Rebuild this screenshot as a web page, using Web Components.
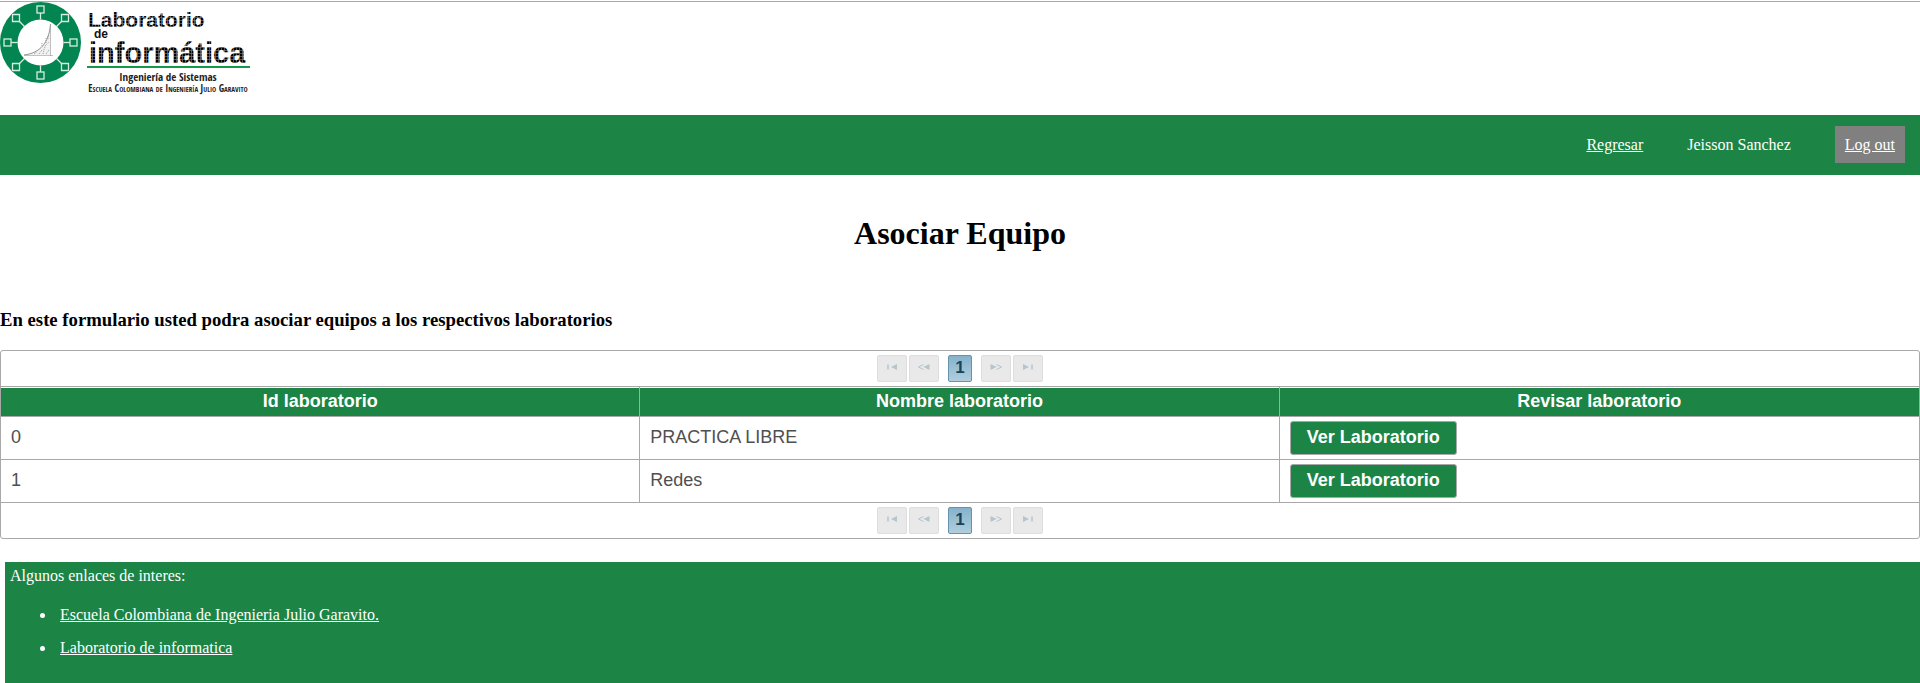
<!DOCTYPE html>
<html lang="es">
<head>
<meta charset="utf-8">
<title>Asociar Equipo</title>
<style>
  body { margin: 0; background: #fff; font: 16px/18px "Liberation Serif", "Times New Roman", serif; --green: #1c8445; --line: #a8a8a8; }
</style>
</head>
<body>
<lab-page>
  <lab-header slot="header"></lab-header>
  <lab-nav slot="header"></lab-nav>
  <lab-table></lab-table>
  <lab-footer slot="footer"></lab-footer>
</lab-page>

<template id="page">
  <style>
    :host { display: flex; flex-direction: column; min-height: 100vh; }
    h1 { margin: 40px 0 0; font-size: 32px; line-height: 36px; text-align: center; }
    h3 { margin: 58px 0 19px; line-height: 22px; }
  </style>
  <slot name="header"></slot>
  <main>
    <h1>Asociar Equipo</h1>
    <h3>En este formulario usted podra asociar equipos a los respectivos laboratorios</h3>
    <slot></slot>
  </main>
  <slot name="footer"></slot>
</template>

<template id="header">
  <style>
    :host { display: block; padding: 1px 0 18px; }
    header { border-top: 1px solid var(--line); }
    svg { display: block; }
  </style>
  <header>
    <svg width="260" height="95" viewBox="0 2 260 95" role="img" aria-label="Laboratorio de Informática">
      <defs>
        <pattern id="dots" width="3" height="3" patternUnits="userSpaceOnUse">
          <rect width="3" height="3" fill="#777"/><rect width="2.3" height="2.3" fill="#000"/>
        </pattern>
        <g id="node"><path d="M0-23V-29.500"/><rect x="-3.500" y="-36.500" width="7" height="7"/></g>
      </defs>
      <circle cx="40.500" cy="42.500" r="40.500" fill="#028550"/>
      <circle cx="40.500" cy="42.500" r="23" fill="#fff"/>
      <g transform="translate(40.500 42.500)" fill="none" stroke="#d4eee1" stroke-width="1.300">
        <use href="#node"/><use href="#node" transform="rotate(90)"/><use href="#node" transform="rotate(180)"/><use href="#node" transform="rotate(270)"/>
        <path d="M16-16L21-21M16 16L21 21M-16 16L-21 21M-16-16L-21-21"/>
        <path d="M21-28h7v7h-7zM21 21h7v7h-7zM-28 21h7v7h-7zM-28-28h7v7h-7z"/>
      </g>
      <path d="M25 55C40 53 49 43 50.500 25V55Z" fill="#f2f2f2"/>
      <path d="M24 55C40 53 49 43 50.500 24" fill="none" stroke="#777" stroke-width=".8"/>
      <path d="M24 55.500H53M50.500 24V56" fill="none" stroke="#999" stroke-width=".6"/>
      <path d="M34 54l3-2m2 2l3-4m1 4l2-8m1 8l3-4m-4-4l4-4m-1-6v4m-6 3v4m4-9v5" fill="none" stroke="#999" stroke-dasharray="1 1"/>
      <g font-family="'Liberation Sans', Arial, sans-serif" font-weight="bold" fill="url(#dots)">
        <text x="88" y="27" font-size="21">Laboratorio</text>
        <text x="94" y="38" font-size="12" fill="#111">de</text>
        <text x="89" y="63" font-size="29">informática</text>
      </g>
      <path d="M87 67H250" stroke="#16984b" stroke-width="2"/>
      <g font-family="'Open Sans Condensed', 'Open Sans', Lato, sans-serif" font-weight="300" fill="#222" text-anchor="middle">
        <text x="168" y="81" font-size="11">Ingeniería de Sistemas</text>
        <text x="168" y="92" font-size="10" font-variant="small-caps">Escuela Colombiana de Ingeniería Julio Garavito</text>
      </g>
    </svg>
  </header>
</template>

<template id="nav">
  <style>
    :host { display: block; background: var(--green); color: #fff; }
    nav { display: flex; justify-content: flex-end; align-items: baseline; gap: 44px; padding: 11px 15px 12px; }
    a, span { color: inherit; }
    .out { background: #808080; padding: 10px 10px 9px; }
  </style>
  <nav><a href="#regresar">Regresar</a><span>Jeisson Sanchez</span><a class="out" href="#logout">Log out</a></nav>
</template>

<template id="pager">
  <style>
    :host { display: flex; justify-content: center; align-items: center; gap: 2px; height: 35px; }
    button { box-sizing: border-box; width: 30px; height: 27px; padding: 0 0 2px; border: 1px solid #dedede; border-radius: 2px; background: #e9e9e9; display: grid; place-items: center; font: bold 17px/20px "Liberation Sans", Arial, sans-serif; }
    .page { width: 24px; margin: 0 7px; border-color: #6592ad; color: #1c4257; background: linear-gradient(#85b2cb, #b0cede); }
    svg { display: block; width: 14px; height: 10px; margin-bottom: 2px; fill: #b5c5ce; stroke: #b5c5ce; }
    .flip { transform: scaleX(-1); }
  </style>
  <button aria-label="Primera página" disabled><svg viewBox="0 0 14 10"><path d="M3 2.500V7.500" stroke-width="1.500"/><path d="M12 2V8L6 5Z" stroke="none"/></svg></button>
  <button aria-label="Página anterior" disabled><svg viewBox="0 0 14 10"><path d="M6.500 2.500L1.500 5L6.500 7.500" fill="none"/><path d="M12.500 2V8L6.500 5Z" stroke="none"/></svg></button>
  <button class="page">1</button>
  <button aria-label="Página siguiente" disabled><svg class="flip" viewBox="0 0 14 10"><path d="M6.500 2.500L1.500 5L6.500 7.500" fill="none"/><path d="M12.500 2V8L6.500 5Z" stroke="none"/></svg></button>
  <button aria-label="Última página" disabled><svg class="flip" viewBox="0 0 14 10"><path d="M3 2.500V7.500" stroke-width="1.500"/><path d="M12 2V8L6 5Z" stroke="none"/></svg></button>
</template>

<template id="table">
  <style>
    :host { display: block; border: 1px solid var(--line); border-radius: 3px; font: 18px/22px "Liberation Sans", Arial, sans-serif; color: #4f4f4f; }
    table { width: 100%; table-layout: fixed; border-spacing: 0; border-bottom: 1px solid var(--line); }
    th, td { box-sizing: border-box; border-top: 1px solid var(--line); padding: 4px 10px; text-align: left; }
    th:not(:last-child), td:not(:last-child) { border-right: 1px solid var(--line); }
    th { height: 30px; padding: 0 10px 2px; text-align: center; color: #fff; background: var(--green); box-shadow: inset 0 1px #fff; }
    td { height: 43px; }
    td:not(:last-child) { padding-bottom: 6px; }
    button { display: block; box-sizing: border-box; height: 34px; padding: 0 16px 2px; border: 1px solid var(--line); border-radius: 3px; background: var(--green); color: #fff; font: inherit; font-weight: bold; }
  </style>
  <lab-pager></lab-pager>
  <table>
    <thead><tr><th>Id laboratorio</th><th>Nombre laboratorio</th><th>Revisar laboratorio</th></tr></thead>
    <tbody>
      <tr><td>0</td><td>PRACTICA LIBRE</td><td><button>Ver Laboratorio</button></td></tr>
      <tr><td>1</td><td>Redes</td><td><button>Ver Laboratorio</button></td></tr>
    </tbody>
  </table>
  <lab-pager></lab-pager>
</template>

<template id="footer">
  <style>
    :host { display: block; flex: 1; margin: 23px 0 0 5px; padding: 5px 5px 10px; background: var(--green); color: #fff; }
    p { margin: 0; }
    ul { display: grid; gap: 15px; margin: 21px 0 0; padding-left: 46px; }
    li { padding-left: 4px; }
    a { color: inherit; }
  </style>
  <footer>
    <p>Algunos enlaces de interes:</p>
    <ul>
      <li><a href="#escuela">Escuela Colombiana de Ingenieria Julio Garavito.</a></li>
      <li><a href="#laboratorio">Laboratorio de informatica</a></li>
    </ul>
  </footer>
</template>

<script>
  for (const name of ['page', 'header', 'nav', 'pager', 'table', 'footer']) {
    customElements.define('lab-' + name, class extends HTMLElement {
      constructor() {
        super();
        this.attachShadow({ mode: 'open' }).append(document.getElementById(name).content.cloneNode(true));
      }
    });
  }
</script>
</body>
</html>
